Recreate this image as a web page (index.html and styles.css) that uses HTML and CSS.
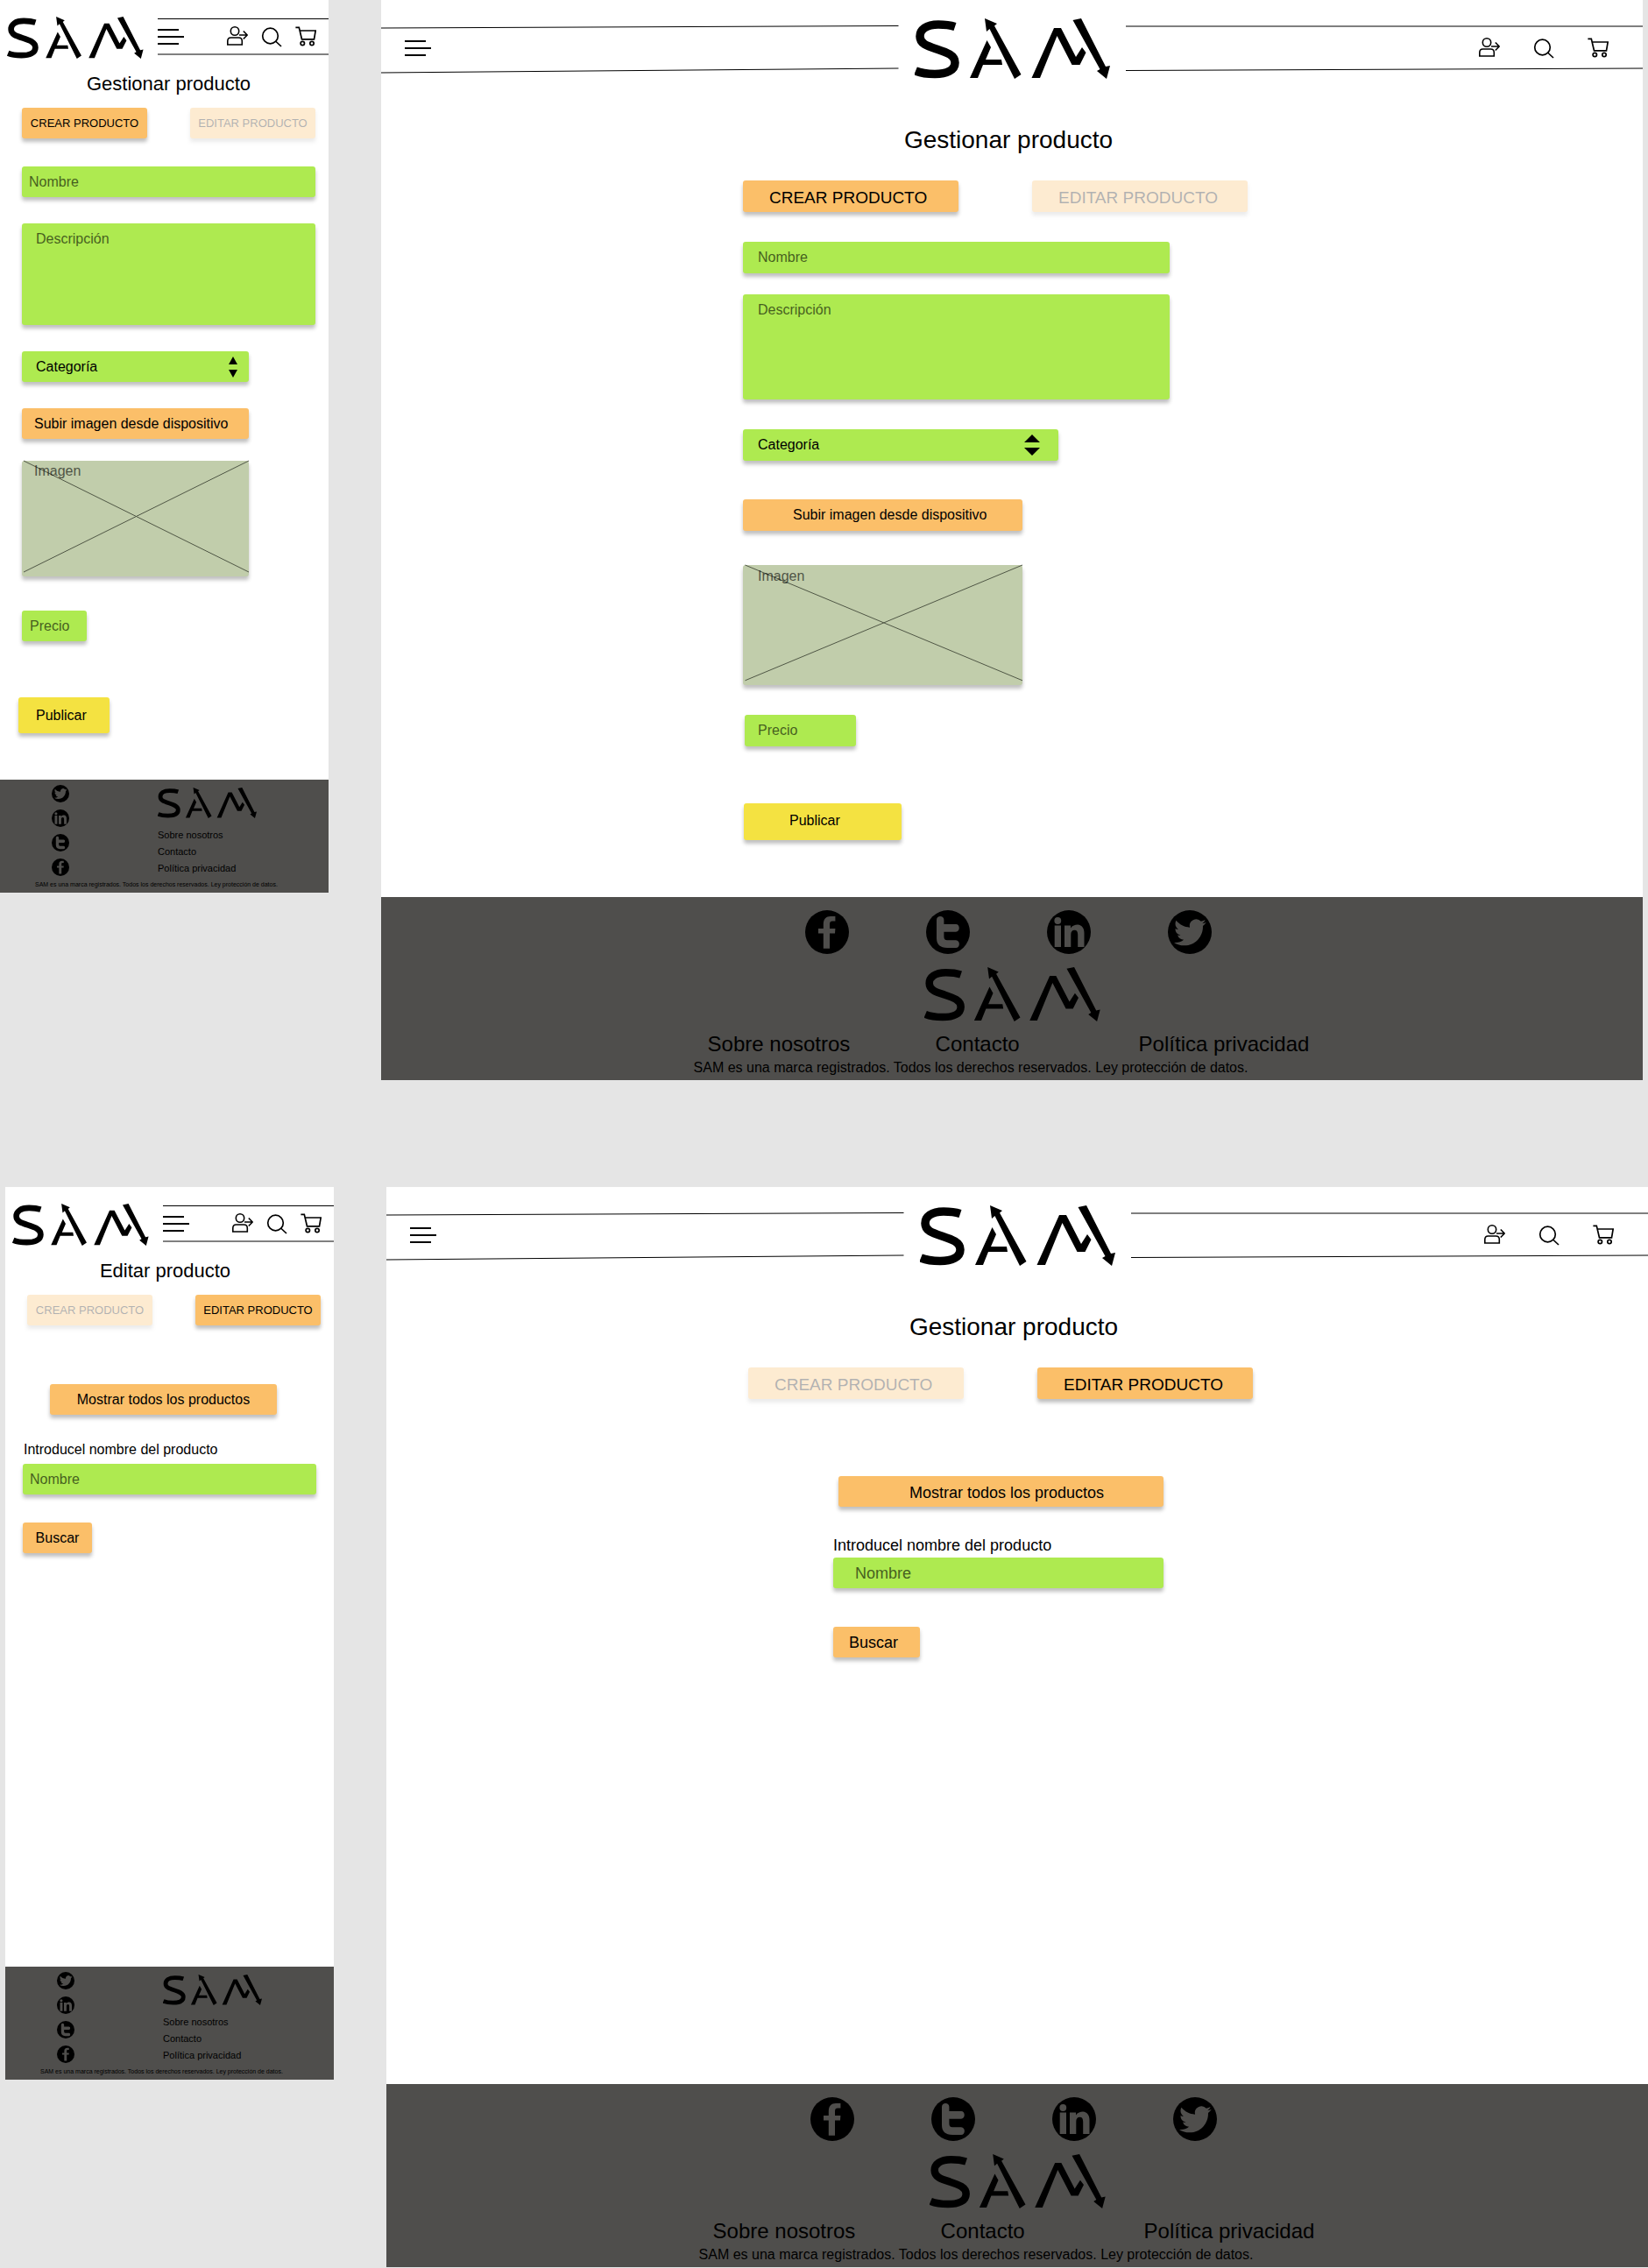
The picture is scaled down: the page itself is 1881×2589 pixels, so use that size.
FILE: index.html
```html
<!DOCTYPE html>
<html lang="es">
<head>
<meta charset="utf-8">
<meta name="viewport" content="width=device-width, initial-scale=1">
<title>SAM - Gestionar producto</title>
<link rel="stylesheet" href="styles.css">
</head>
<body>
<svg class="sprite" aria-hidden="true">
  <symbol id="logo" viewBox="0 0 223 69">
    <path d="M46 9.500C39 7.200 33 7 27 7C13 7 6 13 6 20.500C6 29 14 31.500 25 35C37 39 46 42 46 50.500C46 59 37 63.500 23 63.500C14 63.500 7 62.500 1 60" fill="none" stroke="#000" stroke-width="9.500"/>
    <path d="M63 68L82.500 25L87 33L81 47H99L100 53H78L72 68Z"/>
    <path d="M80 0L94 6L91 8.500L121.500 64L114 69L85.500 12L82 15Z"/>
    <path d="M133.500 68L159 11H167L184 44L191 33L195.500 39L188.500 53H179.500L162.500 20L143 68Z"/>
    <path d="M180.500 2L190 0L218 55L223 54L219 69L208 60L211.500 58Z"/>
  </symbol>
  <symbol id="menu" viewBox="0 0 30 18"><path d="M0 1H24M0 9H30M0 17H24" stroke="#000" stroke-width="2"/></symbol>
  <symbol id="user" viewBox="0 0 24 24"><g fill="none" stroke="#000" stroke-width="1.600"><circle cx="9" cy="5.500" r="4.700"/><path d="M.8 21V17C.8 14.500 2 13 4.500 13H13.500C16 13 17.300 14.500 17.300 17V21ZM14 10H23M18.800 5.500L23.200 10L18.800 14.500"/></g></symbol>
  <symbol id="search" viewBox="0 0 24 24"><g fill="none" stroke="#000" stroke-width="1.700"><circle cx="10.500" cy="11" r="8.800"/><path d="M16.500 17L23 23"/></g></symbol>
  <symbol id="cart" viewBox="0 0 24 24"><g fill="none" stroke="#000" stroke-width="1.700"><path d="M.4 1.300H4.300L7.500 14.800H21.500L23.200 5H5.400"/><circle cx="8.300" cy="19.500" r="2.200"/><circle cx="19" cy="19.500" r="2.200"/></g></symbol>
  <symbol id="facebook" viewBox="0 0 50 50"><circle cx="25" cy="25" r="25"/><path class="cut" d="M15 21H20.800V16C20.800 10 24 7 29 7H34.400V12.500H31C29 12.500 28 13.500 28 16V21H34.400L34 26.500H28V43.700H20.800V26.500H15Z"/></symbol>
  <symbol id="tumblr" viewBox="0 0 50 50"><circle cx="25" cy="25" r="25"/><path class="cut" d="M12 11C12 5.700 20.400 5.700 20.400 11V16H34C39 16 39 24.700 34 24.700H20.400V30C20.400 33 21.500 34.200 24 34.200H34C39.200 34.200 39.200 43 34 43H24C16 43 12 39 12 32Z"/></symbol>
  <symbol id="linkedin" viewBox="0 0 50 50"><circle cx="25" cy="25" r="25"/><circle class="cut" cx="12.300" cy="12" r="3.900"/><path class="cut" d="M8.700 17.500H16V42H8.700ZM20 42V17.500H27V20.500C29 17.500 32 16.500 35 16.500C40 17 42.500 20.500 42.500 26V42H35.200V28C35.200 24.500 34 22.800 31.500 22.800C28.500 22.800 27.300 24.800 27.300 28V42Z"/></symbol>
  <symbol id="twitter" viewBox="0 0 50 50"><circle cx="25" cy="25" r="25"/><path class="cut" transform="translate(7 7) scale(1.530)" d="M23.953 4.570a10 10 0 01-2.825.775 4.958 4.958 0 002.163-2.723c-.951.555-2.005.959-3.127 1.184a4.920 4.920 0 00-8.384 4.482C7.690 8.095 4.067 6.130 1.640 3.162a4.822 4.822 0 00-.666 2.475c0 1.710.870 3.213 2.188 4.096a4.904 4.904 0 01-2.228-.616v.060a4.923 4.923 0 003.946 4.827 4.996 4.996 0 01-2.212.085 4.936 4.936 0 004.604 3.417 9.867 9.867 0 01-6.102 2.105c-.390 0-.779-.023-1.170-.067a13.995 13.995 0 007.557 2.209c9.053 0 13.998-7.496 13.998-13.985 0-.210 0-.420-.015-.630A9.935 9.935 0 0024 4.590z"/></symbol>
</svg>

<div class="row row--create">
  <section class="phone">
    <header class="phone-head">
      <a href="#" aria-label="SAM"><svg class="logo"><use href="#logo"/></svg></a>
      <nav class="phone-bar">
        <button class="icon icon--menu" aria-label="Menú"><svg><use href="#menu"/></svg></button>
        <button class="icon" aria-label="Usuario"><svg><use href="#user"/></svg></button>
        <button class="icon" aria-label="Buscar"><svg><use href="#search"/></svg></button>
        <button class="icon" aria-label="Carrito"><svg><use href="#cart"/></svg></button>
      </nav>
    </header>
    <main class="body">
      <h1 class="title title--create">Gestionar producto</h1>
      <div class="tabs">
        <button class="box tab">CREAR PRODUCTO</button>
        <button class="box tab tab--off">EDITAR PRODUCTO</button>
      </div>
      <form class="create">
        <input class="box field name" aria-label="Nombre" placeholder="Nombre">
        <textarea class="box field description" aria-label="Descripción" placeholder="Descripción"></textarea>
        <div class="picker">
          <select class="box field category" aria-label="Categoría"><option>Categoría</option></select>
          <svg class="arrows" viewBox="0 0 10 24" preserveAspectRatio="none"><path d="M5 0L10 9H0ZM0 15H10L5 24Z"/></svg>
        </div>
        <button type="button" class="box upload">Subir imagen desde dispositivo</button>
        <div class="box preview">
          <span class="preview-text">Imagen</span>
          <svg class="cross" viewBox="0 0 259 132" preserveAspectRatio="none"><path d="M2 0L259 127M2 127L259 0"/></svg>
        </div>
        <input class="box field price" aria-label="Precio" placeholder="Precio">
        <button type="button" class="box publish">Publicar</button>
      </form>
    </main>
    <footer class="foot phone-foot">
      <div class="social">
        <a href="#" aria-label="Twitter"><svg><use href="#twitter"/></svg></a>
        <a href="#" aria-label="LinkedIn"><svg><use href="#linkedin"/></svg></a>
        <a href="#" aria-label="Tumblr"><svg><use href="#tumblr"/></svg></a>
        <a href="#" aria-label="Facebook"><svg><use href="#facebook"/></svg></a>
      </div>
      <div class="about">
        <svg class="foot-logo" role="img" aria-label="SAM"><use href="#logo"/></svg>
        <nav class="links"><a href="#">Sobre nosotros</a><a href="#">Contacto</a><a href="#">Política privacidad</a></nav>
      </div>
      <p class="legal">SAM es una marca registrados. Todos los derechos reservados. Ley protección de datos.</p>
    </footer>
  </section>

  <section class="wide">
    <header class="wide-head">
      <div class="rail">
        <svg class="rail-lines" viewBox="0 0 590 69" preserveAspectRatio="none"><path d="M0 11L590 8.500M0 62L590 57"/></svg>
        <nav class="rail-nav"><button class="icon icon--menu" aria-label="Menú"><svg><use href="#menu"/></svg></button></nav>
      </div>
      <a href="#" aria-label="SAM"><svg class="logo"><use href="#logo"/></svg></a>
      <div class="rail">
        <svg class="rail-lines" viewBox="0 0 590 69" preserveAspectRatio="none"><path d="M0 9H590M0 59.500L590 57"/></svg>
        <nav class="rail-nav rail-nav--end">
          <button class="icon" aria-label="Usuario"><svg><use href="#user"/></svg></button>
          <button class="icon" aria-label="Buscar"><svg><use href="#search"/></svg></button>
          <button class="icon" aria-label="Carrito"><svg><use href="#cart"/></svg></button>
        </nav>
      </div>
    </header>
    <main class="body">
      <h1 class="title">Gestionar producto</h1>
      <div class="panel">
        <div class="tabs">
          <button class="box tab">CREAR PRODUCTO</button>
          <button class="box tab tab--off">EDITAR PRODUCTO</button>
        </div>
        <form class="create">
          <input class="box field name" aria-label="Nombre" placeholder="Nombre">
          <textarea class="box field description" aria-label="Descripción" placeholder="Descripción"></textarea>
          <div class="picker">
            <select class="box field category" aria-label="Categoría"><option>Categoría</option></select>
            <svg class="arrows" viewBox="0 0 10 24" preserveAspectRatio="none"><path d="M5 0L10 9H0ZM0 15H10L5 24Z"/></svg>
          </div>
          <button type="button" class="box upload">Subir imagen desde dispositivo</button>
          <div class="box preview">
            <span class="preview-text">Imagen</span>
            <svg class="cross" viewBox="0 0 259 132" preserveAspectRatio="none"><path d="M2 0L259 127M2 127L259 0"/></svg>
          </div>
          <input class="box field price" aria-label="Precio" placeholder="Precio">
          <button type="button" class="box publish">Publicar</button>
        </form>
      </div>
    </main>
    <footer class="foot wide-foot">
      <div class="social">
        <a href="#" aria-label="Facebook"><svg><use href="#facebook"/></svg></a>
        <a href="#" aria-label="Tumblr"><svg><use href="#tumblr"/></svg></a>
        <a href="#" aria-label="LinkedIn"><svg><use href="#linkedin"/></svg></a>
        <a href="#" aria-label="Twitter"><svg><use href="#twitter"/></svg></a>
      </div>
      <svg class="foot-logo" role="img" aria-label="SAM"><use href="#logo"/></svg>
      <nav class="links"><a href="#">Sobre nosotros</a><a href="#">Contacto</a><a href="#">Política privacidad</a></nav>
      <p class="legal">SAM es una marca registrados. Todos los derechos reservados. Ley protección de datos.</p>
    </footer>
  </section>
</div>

<div class="row row--edit">
  <section class="phone">
    <header class="phone-head">
      <a href="#" aria-label="SAM"><svg class="logo"><use href="#logo"/></svg></a>
      <nav class="phone-bar">
        <button class="icon icon--menu" aria-label="Menú"><svg><use href="#menu"/></svg></button>
        <button class="icon" aria-label="Usuario"><svg><use href="#user"/></svg></button>
        <button class="icon" aria-label="Buscar"><svg><use href="#search"/></svg></button>
        <button class="icon" aria-label="Carrito"><svg><use href="#cart"/></svg></button>
      </nav>
    </header>
    <main class="body">
      <h1 class="title">Editar producto</h1>
      <div class="tabs">
        <button class="box tab tab--off">CREAR PRODUCTO</button>
        <button class="box tab">EDITAR PRODUCTO</button>
      </div>
      <form class="find">
        <button type="button" class="box show-all">Mostrar todos los productos</button>
        <label class="find-label" for="find-phone">Introducel nombre del producto</label>
        <input class="box field find-name" id="find-phone" placeholder="Nombre">
        <button type="button" class="box find-go">Buscar</button>
      </form>
    </main>
    <footer class="foot phone-foot">
      <div class="social">
        <a href="#" aria-label="Twitter"><svg><use href="#twitter"/></svg></a>
        <a href="#" aria-label="LinkedIn"><svg><use href="#linkedin"/></svg></a>
        <a href="#" aria-label="Tumblr"><svg><use href="#tumblr"/></svg></a>
        <a href="#" aria-label="Facebook"><svg><use href="#facebook"/></svg></a>
      </div>
      <div class="about">
        <svg class="foot-logo" role="img" aria-label="SAM"><use href="#logo"/></svg>
        <nav class="links"><a href="#">Sobre nosotros</a><a href="#">Contacto</a><a href="#">Política privacidad</a></nav>
      </div>
      <p class="legal">SAM es una marca registrados. Todos los derechos reservados. Ley protección de datos.</p>
    </footer>
  </section>

  <section class="wide">
    <header class="wide-head">
      <div class="rail">
        <svg class="rail-lines" viewBox="0 0 590 69" preserveAspectRatio="none"><path d="M0 11L590 8.500M0 62L590 57"/></svg>
        <nav class="rail-nav"><button class="icon icon--menu" aria-label="Menú"><svg><use href="#menu"/></svg></button></nav>
      </div>
      <a href="#" aria-label="SAM"><svg class="logo"><use href="#logo"/></svg></a>
      <div class="rail">
        <svg class="rail-lines" viewBox="0 0 590 69" preserveAspectRatio="none"><path d="M0 9H590M0 59.500L590 57"/></svg>
        <nav class="rail-nav rail-nav--end">
          <button class="icon" aria-label="Usuario"><svg><use href="#user"/></svg></button>
          <button class="icon" aria-label="Buscar"><svg><use href="#search"/></svg></button>
          <button class="icon" aria-label="Carrito"><svg><use href="#cart"/></svg></button>
        </nav>
      </div>
    </header>
    <main class="body">
      <h1 class="title">Gestionar producto</h1>
      <div class="panel">
        <div class="tabs">
          <button class="box tab tab--off">CREAR PRODUCTO</button>
          <button class="box tab">EDITAR PRODUCTO</button>
        </div>
        <form class="find">
          <button type="button" class="box show-all">Mostrar todos los productos</button>
          <label class="find-label" for="find-wide">Introducel nombre del producto</label>
          <input class="box field find-name" id="find-wide" placeholder="Nombre">
          <button type="button" class="box find-go">Buscar</button>
        </form>
      </div>
    </main>
    <footer class="foot wide-foot">
      <div class="social">
        <a href="#" aria-label="Facebook"><svg><use href="#facebook"/></svg></a>
        <a href="#" aria-label="Tumblr"><svg><use href="#tumblr"/></svg></a>
        <a href="#" aria-label="LinkedIn"><svg><use href="#linkedin"/></svg></a>
        <a href="#" aria-label="Twitter"><svg><use href="#twitter"/></svg></a>
      </div>
      <svg class="foot-logo" role="img" aria-label="SAM"><use href="#logo"/></svg>
      <nav class="links"><a href="#">Sobre nosotros</a><a href="#">Contacto</a><a href="#">Política privacidad</a></nav>
      <p class="legal">SAM es una marca registrados. Todos los derechos reservados. Ley protección de datos.</p>
    </footer>
  </section>
</div>
</body>
</html>
```
FILE: styles.css
```css
:root {
  --green: #aeea50;
  --orange: #fbbf69;
  --yellow: #f4e241;
  --slate: #4f4e4c;
}

* { box-sizing: border-box; }

body {
  margin: 0;
  background: #e5e5e5;
  color: #000;
  font: 16px/20px "Liberation Sans", Arial, sans-serif;
}

button, input, select, textarea { font: inherit; color: inherit; }
svg { display: block; }
a { color: inherit; text-decoration: none; }
h1, p { margin: 0; font-weight: 400; }

.sprite { position: absolute; width: 0; height: 0; }
.cut { fill: var(--slate); }

/* Rows of screens: phone and desktop side by side */
.row {
  display: grid;
  grid-template-columns: 375px minmax(0, 1fr);
  align-items: start;
  gap: 60px;
}
.row--create { padding: 0 6px 122px 0; }
.row--edit { padding: 0 0 1px 6px; }

.phone, .wide {
  display: flex;
  flex-direction: column;
  background: #fff;
}
.phone { min-height: 1019px; }
.wide { min-height: 1233px; }
.body { flex: 1; }

/* Shared pieces */
.icon {
  padding: 0;
  border: 0;
  background: none;
}
.icon svg { width: 24px; height: 24px; }
.icon--menu svg { width: 30px; height: 18px; }

.box {
  display: block;
  height: 35px;
  margin: 0;
  padding: 0;
  border: 0;
  border-radius: 3px;
  background: var(--orange);
  box-shadow: 0 4px 4px rgba(0, 0, 0, 0.25);
}
.tabs { display: flex; justify-content: space-between; }
.tab--off { opacity: 0.3; }

.field {
  appearance: none;
  background: var(--green);
  outline: 0;
}
.field::placeholder { color: #000; opacity: 0.6; }
.description { resize: none; }

.picker { display: grid; align-items: center; }
.picker > * { grid-area: 1 / 1; }
.category { width: 100%; }
.arrows { justify-self: end; height: 24px; pointer-events: none; }

.preview {
  display: grid;
  grid-template-rows: 100%;
  background: #c1cdab;
}
.preview > * { grid-area: 1 / 1; }
.preview-text { opacity: 0.6; }
.cross { width: 100%; height: 100%; overflow: visible; }
.cross path { stroke: #4f5645; vector-effect: non-scaling-stroke; }

.publish { background: var(--yellow); }
.find-label { display: block; }
.foot { background: var(--slate); }
.social svg { width: 100%; height: 100%; }

/* Phone screen */
.phone-head {
  display: flex;
  gap: 16px;
  padding: 19px 0 0 8px;
}
.phone-head .logo { width: 156px; height: 48px; }
.phone-bar {
  flex: 1;
  display: flex;
  align-items: center;
  gap: 15px;
  height: 42px;
  margin-top: 2px;
  padding-right: 14px;
  border-top: 1px solid #000;
  border-bottom: 2px solid #808080;
}
.phone-bar .icon--menu { margin-right: auto; }

.phone .body { padding: 13px 15px 53px 25px; }
.phone .title {
  padding-right: 20px;
  font-size: 22px;
  line-height: 32px;
  text-align: center;
}
.phone .title--create { padding-right: 0; }
.phone .tabs { margin-top: 11px; }
.phone .tab { width: 143px; font-size: 13px; }

.phone .create, .phone .find {
  display: flex;
  flex-direction: column;
  align-items: flex-start;
}
.phone .name { width: 100%; margin-top: 32px; padding-left: 8px; }
.phone .description { width: 100%; height: 116px; margin-top: 30px; padding: 8px 16px; }
.phone .picker { width: 259px; margin-top: 30px; }
.phone .category { padding-left: 16px; }
.phone .arrows { width: 10px; margin-right: 13px; }
.phone .upload { width: 259px; margin-top: 30px; padding-left: 14px; text-align: left; }
.phone .preview { width: 259px; height: 132px; margin-top: 25px; }
.phone .preview-text { padding: 2px 14px; }
.phone .price { width: 74px; margin-top: 39px; padding-left: 9px; }
.phone .publish { width: 104px; height: 41px; margin: 64px 0 0 -4px; padding-left: 20px; text-align: left; }

.phone .find { margin: 0 5px 0 -5px; }
.phone .show-all { width: 259px; margin: 67px 0 0 31px; }
.phone .find-label { margin: 30px 0 6px 1px; }
.phone .find-name { width: 100%; padding-left: 8px; }
.phone .find-go { width: 79px; margin-top: 32px; }

.phone-foot {
  display: grid;
  grid-template-columns: 20px auto;
  column-gap: 101px;
  padding: 6px 20px 3px 59px;
}
.phone-foot .social { display: grid; gap: 8px; align-content: start; }
.phone-foot .social a { width: 20px; height: 20px; }
.phone-foot .about { padding-top: 3px; }
.phone-foot .foot-logo { width: 113px; height: 35px; }
.phone-foot .links {
  display: grid;
  margin-top: 10px;
  font-size: 11px;
  line-height: 19px;
}
.phone-foot .legal {
  grid-column: 1 / -1;
  margin: 3px 0 0 -19px;
  font-size: 7px;
  line-height: 12px;
}

/* Desktop screen */
.wide-head {
  display: grid;
  grid-template-columns: minmax(0, 1fr) 223px minmax(0, 1fr);
  gap: 18px;
  padding-top: 21px;
}
.wide-head .logo { width: 223px; height: 69px; }
.rail { display: grid; }
.rail > * { grid-area: 1 / 1; }
.rail-lines { width: 100%; height: 69px; }
.rail-lines path { stroke: #000; vector-effect: non-scaling-stroke; }
.rail-nav { display: flex; align-items: center; padding: 0 39px 2px 27px; }
.rail-nav--end { justify-content: flex-end; gap: 38px; }

.wide .body { padding-bottom: 65px; }
.wide .title {
  margin-top: 52px;
  padding-right: 8px;
  font-size: 28px;
  line-height: 36px;
  text-align: center;
}
.panel {
  width: 614px;
  margin: 28px auto 0;
  padding-right: 38px;
}
.wide .tab {
  width: 246px;
  height: 36px;
  padding: 4px 0 0 30px;
  font-size: 19px;
  text-align: left;
}
.wide .create {
  display: flex;
  flex-direction: column;
  align-items: flex-start;
}
.wide .create .box { height: 36px; }
.wide .name { width: 487px; margin-top: 34px; padding-left: 17px; }
.wide .create .description { width: 487px; height: 120px; margin-top: 24px; padding: 8px 17px; }
.wide .picker { width: 360px; margin-top: 34px; }
.wide .category { padding-left: 17px; }
.wide .arrows { width: 18px; margin-right: 21px; }
.wide .upload { width: 319px; margin-top: 44px; padding-left: 57px; text-align: left; }
.wide .create .preview { width: 319px; height: 137px; margin-top: 39px; }
.wide .preview-text { padding: 3px 17px; }
.wide .price { width: 127px; margin: 34px 0 0 2px; padding-left: 15px; }
.wide .create .publish {
  width: 180px;
  height: 42px;
  margin: 65px 0 0 1px;
  padding: 0 0 2px 52px;
  text-align: left;
}

.wide .find { width: 377px; margin-left: 97px; font-size: 18px; }
.wide .show-all { width: 371px; margin: 88px 0 0 6px; padding: 2px 0 0 81px; text-align: left; }
.wide .find-label { margin: 34px 0 4px; }
.wide .find-name { width: 100%; padding: 2px 0 0 25px; }
.wide .find-go { width: 99px; margin-top: 44px; padding-left: 18px; text-align: left; }

.wide-foot {
  display: flex;
  flex-direction: column;
  align-items: center;
  padding: 15px 0 3px;
}
.wide-foot .social { display: flex; gap: 88px; padding-right: 8px; }
.wide-foot .social a { width: 50px; height: 50px; }
.wide-foot .foot-logo { width: 201px; height: 62px; margin-top: 15px; }
.wide-foot .links {
  display: grid;
  grid-template-columns: 260px 232px auto;
  margin-top: 10px;
  padding-right: 8px;
  font-size: 24px;
  line-height: 32px;
}
.wide-foot .legal {
  padding-right: 94px;
  line-height: 22px;
}
```
